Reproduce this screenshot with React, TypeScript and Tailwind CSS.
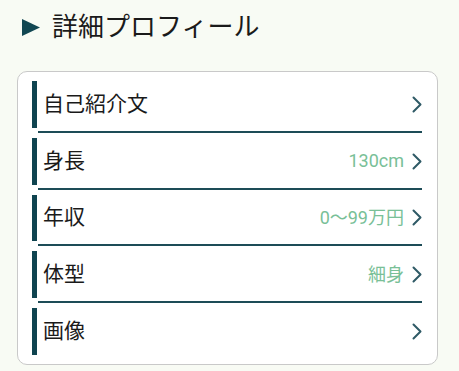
import React from "react";

const rows = [
  { label: "自己紹介文", value: "" },
  { label: "身長", value: "130cm" },
  { label: "年収", value: "0〜99万円" },
  { label: "体型", value: "細身" },
  { label: "画像", value: "" },
];

function Chevron() {
  return (
    <svg width="10" height="17" viewBox="0 0 10 17" className="shrink-0">
      <path d="M1.5 1.5 L8.5 8.5 L1.5 15.5" fill="none" stroke="#2f5a66" strokeWidth="2" strokeLinecap="round" strokeLinejoin="round" />
    </svg>
  );
}

export default function App() {
  return (
    <div
      className="w-[459px] h-[371px] bg-[#f8fbf4] overflow-hidden"
      style={{ fontFamily: '"Roboto", "Noto Sans CJK JP", sans-serif' }}
    >
      <div className="flex items-center h-[50px] pl-[22px] pt-[4px]">
        <svg width="18" height="17" viewBox="0 0 18 17" className="shrink-0">
          <path d="M0 0 L18 8.5 L0 17 Z" fill="#114752" />
        </svg>
        <span className="ml-[12px] text-[26px] leading-none text-[#1a1a1a]">詳細プロフィール</span>
      </div>
      <div className="mx-[17px] mt-[21px] w-[421px] bg-white border border-[#c9c9c9] rounded-[10px] pt-[9px] pb-[9px] pl-[14px] pr-[15px]">
        {rows.map((r, i) => (
          <div key={r.label} className={i > 0 ? "mt-[5px]" : ""}>
            <div className="flex items-center h-[46.75px]">
              <div className="w-[5px] h-full bg-[#0f4450]" />
              <span className="ml-[6px] text-[21px] leading-none text-[#1a1a1a]">{r.label}</span>
              <div className="flex-1" />
              {r.value && (
                <span className="text-[18px] leading-none text-[#79c097] mr-[8px]">{r.value}</span>
              )}
              <Chevron />
            </div>
            {i < rows.length - 1 && (
              <div className="ml-[6px] mt-[3px] h-[2px] bg-[#1d4c57]" />
            )}
          </div>
        ))}
      </div>
    </div>
  );
}
